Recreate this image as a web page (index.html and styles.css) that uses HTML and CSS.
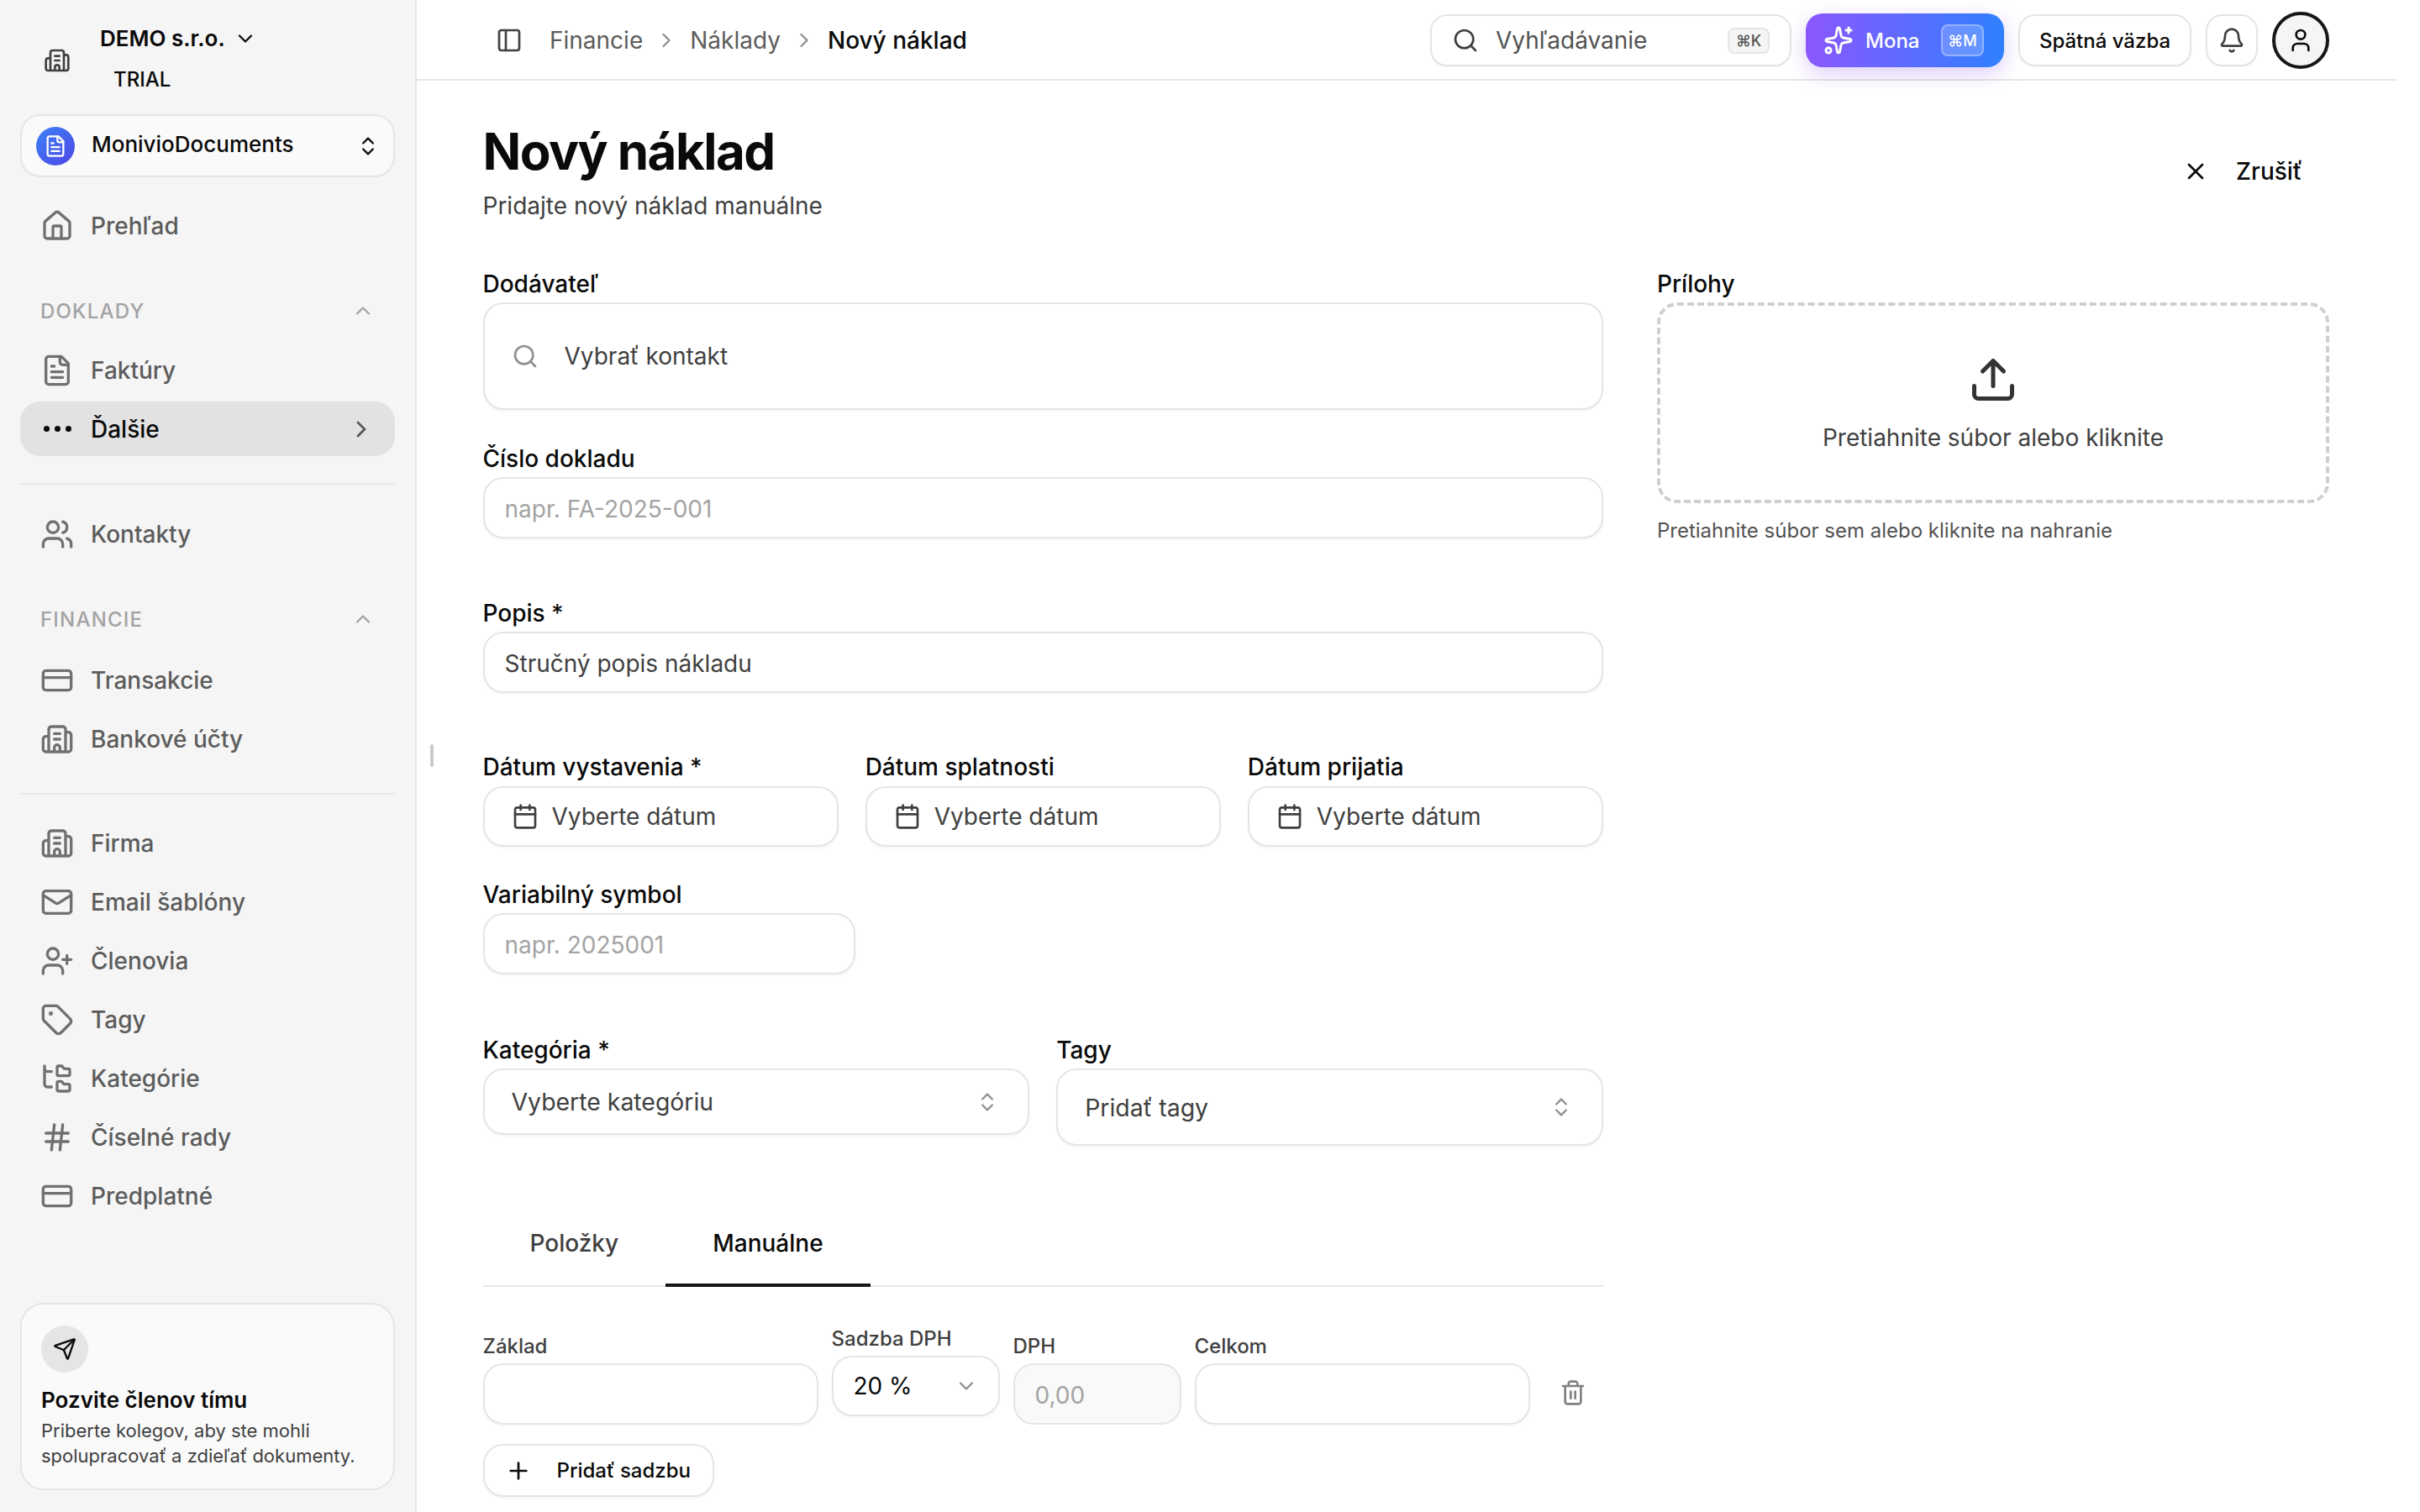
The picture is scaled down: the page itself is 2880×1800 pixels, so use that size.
FILE: index.html
```html
<!DOCTYPE html>
<html lang="sk">

<head>
    <meta charset="UTF-8">
    <title>Nový náklad</title>
    <link rel="stylesheet" href="styles.css">
</head>

<body>
    <svg class="sprite" xmlns="http://www.w3.org/2000/svg">
        <symbol id="i-building" viewBox="0 0 24 24"><path d="M10 12h4M10 8h4M14 21v-3a2 2 0 0 0-4 0v3M6 10H4a2 2 0 0 0-2 2v7a2 2 0 0 0 2 2h16a2 2 0 0 0 2-2V9a2 2 0 0 0-2-2h-2M6 21V5a2 2 0 0 1 2-2h8a2 2 0 0 1 2 2v16"/></symbol>
        <symbol id="i-house" viewBox="0 0 24 24"><path d="M15 21v-8a1 1 0 0 0-1-1h-4a1 1 0 0 0-1 1v8"/><path d="M3 10a2 2 0 0 1 .709-1.528l7-5.999a2 2 0 0 1 2.582 0l7 5.999A2 2 0 0 1 21 10v9a2 2 0 0 1-2 2H5a2 2 0 0 1-2-2z"/></symbol>
        <symbol id="i-file" viewBox="0 0 24 24"><path d="M15 2H6a2 2 0 0 0-2 2v16a2 2 0 0 0 2 2h12a2 2 0 0 0 2-2V7Z"/><path d="M14 2v4a2 2 0 0 0 2 2h4M10 9H8M16 13H8M16 17H8"/></symbol>
        <symbol id="i-users" viewBox="0 0 24 24"><path d="M16 21v-2a4 4 0 0 0-4-4H6a4 4 0 0 0-4 4v2"/><circle cx="9" cy="7" r="4"/><path d="M22 21v-2a4 4 0 0 0-3-3.87M16 3.13a4 4 0 0 1 0 7.75"/></symbol>
        <symbol id="i-card" viewBox="0 0 24 24"><rect x="2" y="5" width="20" height="14" rx="2"/><path d="M2 10h20"/></symbol>
        <symbol id="i-mail" viewBox="0 0 24 24"><rect x="2" y="4" width="20" height="16" rx="2"/><path d="m22 7-8.97 5.7a1.94 1.94 0 0 1-2.06 0L2 7"/></symbol>
        <symbol id="i-user-plus" viewBox="0 0 24 24"><path d="M16 21v-2a4 4 0 0 0-4-4H6a4 4 0 0 0-4 4v2"/><circle cx="9" cy="7" r="4"/><path d="M19 8v6M22 11h-6"/></symbol>
        <symbol id="i-tag" viewBox="0 0 24 24"><path d="M12.586 2.586A2 2 0 0 0 11.172 2H4a2 2 0 0 0-2 2v7.172a2 2 0 0 0 .586 1.414l8.704 8.704a2.426 2.426 0 0 0 3.42 0l6.58-6.58a2.426 2.426 0 0 0 0-3.42z"/><circle cx="7.5" cy="7.5" r=".5" fill="currentColor"/></symbol>
        <symbol id="i-tree" viewBox="0 0 24 24"><path d="M20 10a1 1 0 0 0 1-1V6a1 1 0 0 0-1-1h-2.5a1 1 0 0 1-.8-.4l-.9-1.2A1 1 0 0 0 15 3h-2a1 1 0 0 0-1 1v5a1 1 0 0 0 1 1Z"/><path d="M20 21a1 1 0 0 0 1-1v-3a1 1 0 0 0-1-1h-2.9a1 1 0 0 1-.88-.55l-.42-.85a1 1 0 0 0-.92-.6H13a1 1 0 0 0-1 1v5a1 1 0 0 0 1 1Z"/><path d="M3 5a2 2 0 0 0 2 2h3M3 3v13a2 2 0 0 0 2 2h3"/></symbol>
        <symbol id="i-hash" viewBox="0 0 24 24"><path d="M4 9h16M4 15h16M10 3 8 21M16 3l-2 18"/></symbol>
        <symbol id="i-send" viewBox="0 0 24 24"><path d="M14.536 21.686a.5.5 0 0 0 .937-.024l6.5-19a.496.496 0 0 0-.635-.635l-19 6.5a.5.5 0 0 0-.024.937l7.93 3.18a2 2 0 0 1 1.112 1.11z"/><path d="m21.854 2.147-10.94 10.939"/></symbol>
        <symbol id="i-search" viewBox="0 0 24 24"><circle cx="11" cy="11" r="8"/><path d="m21 21-4.3-4.3"/></symbol>
        <symbol id="i-panel" viewBox="0 0 24 24"><rect x="3" y="3" width="18" height="18" rx="2"/><path d="M9 3v18"/></symbol>
        <symbol id="i-sparkles" viewBox="0 0 24 24"><path d="M11.017 2.814a1 1 0 0 1 1.966 0l1.051 5.558a2 2 0 0 0 1.594 1.594l5.558 1.051a1 1 0 0 1 0 1.966l-5.558 1.051a2 2 0 0 0-1.594 1.594l-1.051 5.558a1 1 0 0 1-1.966 0l-1.051-5.558a2 2 0 0 0-1.594-1.594l-5.558-1.051a1 1 0 0 1 0-1.966l5.558-1.051a2 2 0 0 0 1.594-1.594z"/><path d="M20 2v4M22 4h-4"/><circle cx="4" cy="20" r="2"/></symbol>
        <symbol id="i-bell" viewBox="0 0 24 24"><path d="M10.268 21a2 2 0 0 0 3.464 0"/><path d="M3.262 15.326A1 1 0 0 0 4 17h16a1 1 0 0 0 .74-1.673C19.41 13.956 18 12.499 18 8A6 6 0 0 0 6 8c0 4.499-1.411 5.956-2.738 7.326"/></symbol>
        <symbol id="i-user" viewBox="0 0 24 24"><path d="M19 21v-2a4 4 0 0 0-4-4H9a4 4 0 0 0-4 4v2"/><circle cx="12" cy="7" r="4"/></symbol>
        <symbol id="i-x" viewBox="0 0 24 24"><path d="M18 6 6 18M6 6l12 12"/></symbol>
        <symbol id="i-calendar" viewBox="0 0 24 24"><path d="M8 2v4M16 2v4"/><rect x="3" y="4" width="18" height="18" rx="2"/><path d="M3 10h18"/></symbol>
        <symbol id="i-upload" viewBox="0 0 24 24"><path d="M12 3v12M17 8l-5-5-5 5M21 15v4a2 2 0 0 1-2 2H5a2 2 0 0 1-2-2v-4"/></symbol>
        <symbol id="i-plus" viewBox="0 0 24 24"><path d="M5 12h14M12 5v14"/></symbol>
        <symbol id="i-trash" viewBox="0 0 24 24"><path d="M3 6h18M19 6v14c0 1-1 2-2 2H7c-1 0-2-1-2-2V6M8 6V4c0-1 1-2 2-2h4c1 0 2 1 2 2v2M10 11v6M14 11v6"/></symbol>
        <symbol id="i-down" viewBox="0 0 24 24"><path d="m6 9 6 6 6-6"/></symbol>
        <symbol id="i-up" viewBox="0 0 24 24"><path d="m18 15-6-6-6 6"/></symbol>
        <symbol id="i-right" viewBox="0 0 24 24"><path d="m9 18 6-6-6-6"/></symbol>
        <symbol id="i-updown" viewBox="0 0 24 24"><path d="m7 15 5 5 5-5M7 9l5-5 5 5"/></symbol>
    </svg>

    <div class="app">
        <aside class="sidebar">
            <div class="company">
                <svg class="icon company-icon"><use href="#i-building"/></svg>
                <div class="company-text">
                    <div class="company-name">DEMO s.r.o. <svg class="icon icon-28"><use href="#i-down"/></svg></div>
                    <div class="company-plan">TRIAL</div>
                </div>
            </div>

            <div class="switcher">
                <span class="switcher-logo"><svg class="icon icon-28"><use href="#i-file"/></svg></span>
                <span class="switcher-name">MonivioDocuments</span>
                <svg class="icon icon-28"><use href="#i-updown"/></svg>
            </div>

            <nav class="nav nav-top">
                <a class="nav-item"><svg class="icon nav-icon"><use href="#i-house"/></svg>Prehľad</a>
            </nav>

            <div class="nav-head nav-head-tight">DOKLADY <svg class="icon icon-28"><use href="#i-up"/></svg></div>
            <nav class="nav">
                <a class="nav-item"><svg class="icon nav-icon"><use href="#i-file"/></svg>Faktúry</a>
                <a class="nav-item active">
                    <span class="dots"><i></i><i></i><i></i></span>Ďalšie
                    <svg class="icon nav-arrow"><use href="#i-right"/></svg>
                </a>
            </nav>

            <div class="nav-line"></div>

            <nav class="nav">
                <a class="nav-item"><svg class="icon nav-icon"><use href="#i-users"/></svg>Kontakty</a>
            </nav>

            <div class="nav-head">FINANCIE <svg class="icon icon-28"><use href="#i-up"/></svg></div>
            <nav class="nav">
                <a class="nav-item"><svg class="icon nav-icon"><use href="#i-card"/></svg>Transakcie</a>
                <a class="nav-item"><svg class="icon nav-icon"><use href="#i-building"/></svg>Bankové účty</a>
            </nav>

            <div class="nav-line nav-line-tight"></div>

            <nav class="nav">
                <a class="nav-item"><svg class="icon nav-icon"><use href="#i-building"/></svg>Firma</a>
                <a class="nav-item"><svg class="icon nav-icon"><use href="#i-mail"/></svg>Email šablóny</a>
                <a class="nav-item"><svg class="icon nav-icon"><use href="#i-user-plus"/></svg>Členovia</a>
                <a class="nav-item"><svg class="icon nav-icon"><use href="#i-tag"/></svg>Tagy</a>
                <a class="nav-item"><svg class="icon nav-icon"><use href="#i-tree"/></svg>Kategórie</a>
                <a class="nav-item"><svg class="icon nav-icon"><use href="#i-hash"/></svg>Číselné rady</a>
                <a class="nav-item"><svg class="icon nav-icon"><use href="#i-card"/></svg>Predplatné</a>
            </nav>

            <div class="invite">
                <span class="invite-icon"><svg class="icon icon-28"><use href="#i-send"/></svg></span>
                <div class="invite-title">Pozvite členov tímu</div>
                <div class="invite-text">Priberte kolegov, aby ste mohli spolupracovať a zdieľať dokumenty.</div>
            </div>
        </aside>

        <span class="resize-handle"></span>

        <div class="main">
            <header class="topbar">
                <svg class="icon topbar-panel"><use href="#i-panel"/></svg>
                <div class="crumbs">
                    <span>Financie</span>
                    <svg class="icon crumb-arrow"><use href="#i-right"/></svg>
                    <span>Náklady</span>
                    <svg class="icon crumb-arrow"><use href="#i-right"/></svg>
                    <span class="crumb-current">Nový náklad</span>
                </div>
                <div class="topbar-actions">
                    <div class="search">
                        <svg class="icon icon-32"><use href="#i-search"/></svg>
                        <span class="search-text">Vyhľadávanie</span>
                        <kbd class="kbd">⌘K</kbd>
                    </div>
                    <button class="mona">
                        <svg class="icon mona-icon"><use href="#i-sparkles"/></svg>
                        <span>Mona</span>
                        <kbd class="kbd kbd-light">⌘M</kbd>
                    </button>
                    <button class="top-btn">Spätná väzba</button>
                    <button class="top-btn bell"><svg class="icon icon-32"><use href="#i-bell"/></svg></button>
                    <span class="avatar"><svg class="icon icon-32"><use href="#i-user"/></svg></span>
                </div>
            </header>

            <main class="content">
                <div class="page-head">
                    <div>
                        <h1>Nový náklad</h1>
                        <p>Pridajte nový náklad manuálne</p>
                    </div>
                    <button class="cancel"><svg class="icon icon-32"><use href="#i-x"/></svg>Zrušiť</button>
                </div>

                <div class="columns">
                    <form class="form">
                        <label class="label">Dodávateľ</label>
                        <div class="box contact">
                            <svg class="icon icon-32 muted"><use href="#i-search"/></svg>
                            <span>Vybrať kontakt</span>
                        </div>

                        <label class="label after-contact">Číslo dokladu</label>
                        <input class="input" type="text" placeholder="napr. FA-2025-001">

                        <label class="label before-popis">Popis *</label>
                        <input class="input input-filled" type="text" value="Stručný popis nákladu">

                        <div class="dates">
                            <div>
                                <label class="label">Dátum vystavenia *</label>
                                <div class="box date"><svg class="icon icon-32"><use href="#i-calendar"/></svg>Vyberte dátum</div>
                            </div>
                            <div>
                                <label class="label">Dátum splatnosti</label>
                                <div class="box date"><svg class="icon icon-32"><use href="#i-calendar"/></svg>Vyberte dátum</div>
                            </div>
                            <div>
                                <label class="label">Dátum prijatia</label>
                                <div class="box date"><svg class="icon icon-32"><use href="#i-calendar"/></svg>Vyberte dátum</div>
                            </div>
                        </div>

                        <label class="label after-dates">Variabilný symbol</label>
                        <input class="input input-symbol" type="text" placeholder="napr. 2025001">

                        <div class="selects">
                            <div>
                                <label class="label">Kategória *</label>
                                <div class="box select">Vyberte kategóriu <svg class="icon icon-28 muted"><use href="#i-updown"/></svg></div>
                            </div>
                            <div>
                                <label class="label">Tagy</label>
                                <div class="box select select-tall">Pridať tagy <svg class="icon icon-28 muted"><use href="#i-updown"/></svg></div>
                            </div>
                        </div>

                        <div class="tabs">
                            <span class="tab">Položky</span>
                            <span class="tab tab-active">Manuálne</span>
                        </div>

                        <div class="rates">
                            <div class="rate rate-wide">
                                <label class="label-small">Základ</label>
                                <input class="input" type="text">
                            </div>
                            <div class="rate rate-narrow rate-raised">
                                <label class="label-small">Sadzba DPH</label>
                                <div class="box vat">20 % <svg class="icon icon-28 muted"><use href="#i-down"/></svg></div>
                            </div>
                            <div class="rate rate-narrow">
                                <label class="label-small">DPH</label>
                                <input class="input input-disabled" type="text" placeholder="0,00" disabled>
                            </div>
                            <div class="rate rate-wide">
                                <label class="label-small">Celkom</label>
                                <input class="input" type="text">
                            </div>
                            <svg class="icon icon-32 trash"><use href="#i-trash"/></svg>
                        </div>

                        <button class="box add-rate" type="button"><svg class="icon icon-32"><use href="#i-plus"/></svg>Pridať sadzbu</button>
                    </form>

                    <div class="attachments">
                        <label class="label">Prílohy</label>
                        <div class="dropzone">
                            <svg class="icon dropzone-icon"><use href="#i-upload"/></svg>
                            <span>Pretiahnite súbor alebo kliknite</span>
                        </div>
                        <p class="hint">Pretiahnite súbor sem alebo kliknite na nahranie</p>
                    </div>
                </div>
            </main>
        </div>
    </div>
</body>

</html>
```
FILE: styles.css
```css
* {
    box-sizing: border-box;
}

body {
    margin: 0;
    background-color: #fff;
    color: #0a0a0a;
    font-family: Inter, 'Liberation Sans', sans-serif;
    font-size: 28px;
}

.sprite {
    display: none;
}

.icon {
    flex: none;
    fill: none;
    stroke: currentColor;
    stroke-width: 2;
    stroke-linecap: round;
    stroke-linejoin: round;
}

.icon-28 {
    width: 28px;
    height: 28px;
}

.icon-32 {
    width: 32px;
    height: 32px;
}

.muted {
    color: #8f8f8f;
}

.app {
    display: flex;
    position: relative;
    width: 2880px;
    height: 1800px;
    overflow: hidden;
}

/* sidebar */
.sidebar {
    display: flex;
    flex-direction: column;
    flex: none;
    width: 496px;
    padding: 0 24px 26px;
    background-color: #f5f5f5;
    border-right: 2px solid #e5e5e5;
}

.company {
    display: flex;
    align-items: center;
    height: 136px;
    padding: 8px 0 0 28px;
}

.company-icon {
    width: 32px;
    height: 32px;
    color: #404040;
}

.company-text {
    margin-left: 35px;
    margin-top: -5px;
}

.company-name {
    display: flex;
    align-items: center;
    gap: 10px;
    font-size: 26px;
    font-weight: 600;
    line-height: 34px;
}

.company-plan {
    margin: 17px 0 0 16px;
    font-size: 24px;
    font-weight: 500;
    line-height: 30px;
}

.switcher {
    display: flex;
    align-items: center;
    height: 75px;
    padding: 0 16px 0 17px;
    background-color: #fafafa;
    border: 2px solid #e5e5e5;
    border-radius: 24px;
    font-size: 26px;
    font-weight: 500;
}

.switcher-logo {
    display: flex;
    align-items: center;
    justify-content: center;
    width: 46px;
    height: 46px;
    border-radius: 50%;
    background: linear-gradient(135deg, #3b82f6, #4f46e5);
    color: #fff;
}

.switcher-name {
    flex: 1;
    margin-left: 20px;
    padding-bottom: 5px;
}

.nav {
    display: flex;
    flex-direction: column;
    gap: 5px;
}

.nav-top {
    margin: 25px 0 2px;
}

.nav-item {
    display: flex;
    align-items: center;
    height: 65px;
    padding-left: 24px;
    border-radius: 24px;
    color: #5c5c5c;
    font-weight: 500;
}

.nav-item.active {
    background-color: #e2e2e2;
    color: #0a0a0a;
}

.nav-icon {
    width: 40px;
    height: 40px;
    margin-right: 20px;
    color: #707070;
}

.nav-arrow {
    width: 32px;
    height: 32px;
    margin-left: auto;
    margin-right: 24px;
    color: #555;
}

.dots {
    display: flex;
    justify-content: center;
    gap: 6px;
    width: 40px;
    margin-right: 20px;
}

.dots i {
    width: 7px;
    height: 7px;
    border-radius: 50%;
    background-color: #0a0a0a;
}

.nav-head {
    display: flex;
    align-items: center;
    justify-content: space-between;
    height: 32px;
    margin: 53px 0 24px;
    padding: 0 24px;
    color: #a3a3a3;
    font-size: 24px;
    font-weight: 500;
    letter-spacing: 1.2px;
}

.nav-head-tight {
    margin: 51px 0 22px;
}

.nav-line {
    height: 2px;
    margin: 32px 0 26px;
    background-color: #e8e8e8;
}

.nav-line-tight {
    margin-bottom: 25px;
}

.invite {
    margin-top: auto;
    padding: 25px 24px 24px 23px;
    background-color: #fafafa;
    border: 2px solid #e5e5e5;
    border-radius: 28px;
}

.invite-icon {
    display: flex;
    align-items: center;
    justify-content: center;
    width: 56px;
    height: 56px;
    border-radius: 50%;
    background-color: #e5e5e5;
}

.invite-title {
    margin-top: 15px;
    font-size: 26px;
    font-weight: 600;
    line-height: 36px;
}

.invite-text {
    margin-top: 3px;
    color: #404040;
    font-size: 22px;
    line-height: 30px;
}

.resize-handle {
    position: absolute;
    left: 512px;
    top: 886px;
    width: 4px;
    height: 27px;
    border-radius: 2px;
    background-color: #ccc;
}

/* topbar */
.main {
    flex: none;
    width: 2356px;
}

.topbar {
    display: flex;
    align-items: center;
    height: 96px;
    padding: 2px 80px 0 94px;
    border-bottom: 2px solid #e5e5e5;
}

.topbar-panel {
    width: 32px;
    height: 32px;
    color: #404040;
}

.crumbs {
    display: flex;
    align-items: center;
    gap: 14px;
    margin-left: 32px;
    color: #5c5c5c;
}

.crumb-arrow {
    width: 28px;
    height: 28px;
    color: #8f8f8f;
}

.crumb-current {
    color: #0a0a0a;
    font-weight: 500;
}

.topbar-actions {
    display: flex;
    align-items: center;
    gap: 17px;
    margin-left: auto;
}

.search {
    display: flex;
    align-items: center;
    width: 430px;
    height: 62px;
    padding: 0 24px;
    border: 2px solid #e5e5e5;
    border-radius: 20px;
    color: #525252;
    box-shadow: 0 1px 2px rgba(0, 0, 0, 0.05);
}

.search .icon {
    color: #404040;
}

.search-text {
    flex: 1;
    margin-left: 20px;
}

.kbd {
    display: flex;
    align-items: center;
    justify-content: center;
    width: 50px;
    height: 31px;
    background-color: #f5f5f5;
    border: 2px solid #e5e5e5;
    border-radius: 8px;
    color: #525252;
    font-family: inherit;
    font-size: 18px;
    font-weight: 500;
}

.mona {
    display: flex;
    align-items: center;
    width: 236px;
    height: 64px;
    padding: 0 24px 0 21px;
    background: linear-gradient(90deg, #8b57ff, #2f80ff);
    border: none;
    border-radius: 20px;
    color: #fff;
    font-family: inherit;
    font-size: 24px;
    font-weight: 500;
    box-shadow: 0 8px 24px rgba(124, 58, 237, 0.25);
}

.mona-icon {
    width: 36px;
    height: 36px;
    margin-right: 14px;
}

.kbd-light {
    width: 51px;
    height: 38px;
    margin-left: auto;
    background-color: rgba(255, 255, 255, 0.2);
    border-color: rgba(255, 255, 255, 0.3);
    color: #fff;
}

.top-btn {
    display: flex;
    align-items: center;
    justify-content: center;
    width: 206px;
    height: 62px;
    padding: 0;
    background-color: #fff;
    border: 2px solid #e5e5e5;
    border-radius: 20px;
    color: #0a0a0a;
    font-family: inherit;
    font-size: 24px;
    font-weight: 500;
    box-shadow: 0 1px 2px rgba(0, 0, 0, 0.05);
}

.bell {
    width: 62px;
    color: #404040;
}

.avatar {
    display: flex;
    align-items: center;
    justify-content: center;
    width: 68px;
    height: 68px;
    background-color: #f5f5f5;
    border: 4px solid #171717;
    border-radius: 50%;
}

/* page */
.content {
    width: 2356px;
    padding: 48px 80px 0 78.5px;
}

.page-head {
    display: flex;
    align-items: center;
    justify-content: space-between;
}

h1 {
    margin: 0;
    font-size: 60px;
    font-weight: 700;
    line-height: 72px;
    letter-spacing: -1.5px;
}

.page-head p {
    margin: 12px 0 0;
    color: #404040;
    font-size: 28px;
    line-height: 34px;
}

.cancel {
    display: flex;
    align-items: center;
    gap: 32px;
    height: 72px;
    margin-top: 2px;
    padding: 0 32px 0 32px;
    background: none;
    border: none;
    color: #0a0a0a;
    font-family: inherit;
    font-size: 28px;
    font-weight: 500;
}

.columns {
    display: grid;
    grid-template-columns: 5fr 3fr;
    gap: 64px;
    margin-top: 62px;
}

.label {
    display: block;
    margin-bottom: 8px;
    font-size: 28px;
    font-weight: 500;
    line-height: 28px;
}

.box {
    display: flex;
    align-items: center;
    background-color: #fff;
    border: 2px solid #e5e5e5;
    border-radius: 24px;
    box-shadow: 0 2px 3px rgba(0, 0, 0, 0.04);
    color: #404040;
    font-family: inherit;
    font-size: 28px;
}

.contact {
    gap: 31px;
    height: 128px;
    padding: 0 32px;
}

.after-contact {
    margin-top: 44px;
}

.input {
    display: block;
    width: 100%;
    height: 73px;
    padding: 2px 24px 0;
    background-color: #fff;
    border: 2px solid #e5e5e5;
    border-radius: 24px;
    box-shadow: 0 2px 3px rgba(0, 0, 0, 0.04);
    color: #404040;
    font-family: inherit;
    font-size: 28px;
    outline: none;
}

.input::placeholder {
    color: #a3a3a3;
}

.before-popis {
    margin-top: 75px;
}

.dates {
    display: grid;
    grid-template-columns: repeat(3, 1fr);
    gap: 32px;
    margin-top: 74px;
}

.date {
    gap: 16px;
    height: 72px;
    margin-top: 9px;
    padding: 0 32px;
}

.after-dates {
    margin-top: 43px;
}

.input-symbol {
    width: 443px;
}

.selects {
    display: grid;
    grid-template-columns: 1fr 1fr;
    gap: 32px;
    align-items: start;
    margin-top: 76px;
}

.select {
    justify-content: space-between;
    height: 79px;
    padding: 0 34px 0 32px;
    font-size: 28.4px;
}

.select-tall {
    height: 92px;
    padding-left: 32px;
}

.tabs {
    display: flex;
    margin-top: 70px;
    border-bottom: 2px solid #e5e5e5;
}

.tab {
    height: 98px;
    padding: 32px 56px 0;
    border-bottom: 4px solid transparent;
    margin-bottom: -2px;
    color: #404040;
    font-weight: 500;
    line-height: 28px;
}

.tab-active {
    border-bottom-color: #171717;
    color: #0a0a0a;
}

.rates {
    display: flex;
    align-items: flex-end;
    gap: 16px;
    margin-top: 50px;
}

.rate-wide {
    width: 399px;
}

.rate-narrow {
    width: 200px;
}

.rate-raised {
    margin-bottom: 10px;
}

.label-small {
    display: block;
    margin-bottom: 8px;
    color: #404040;
    font-size: 24px;
    font-weight: 500;
    line-height: 24px;
}

.vat {
    justify-content: space-between;
    height: 72px;
    padding: 0 24px;
    color: #0a0a0a;
}

.input-disabled {
    background-color: #f9f9f9;
    box-shadow: none;
}

.trash {
    margin: 0 0 22px 19px;
    color: #808080;
}

.add-rate {
    gap: 30px;
    width: 275px;
    height: 63px;
    margin-top: 23px;
    padding: 0 24px;
    color: #0a0a0a;
    font-size: 24px;
    font-weight: 500;
}

.dropzone {
    display: flex;
    flex-direction: column;
    align-items: center;
    justify-content: center;
    gap: 22px;
    height: 239px;
    border: 4px dashed #cfcfcf;
    border-radius: 24px;
    color: #404040;
}

.dropzone-icon {
    width: 60px;
    height: 60px;
    color: #333;
}

.hint {
    margin: 20px 0 0;
    color: #525252;
    font-size: 24px;
    line-height: 26px;
}
```
